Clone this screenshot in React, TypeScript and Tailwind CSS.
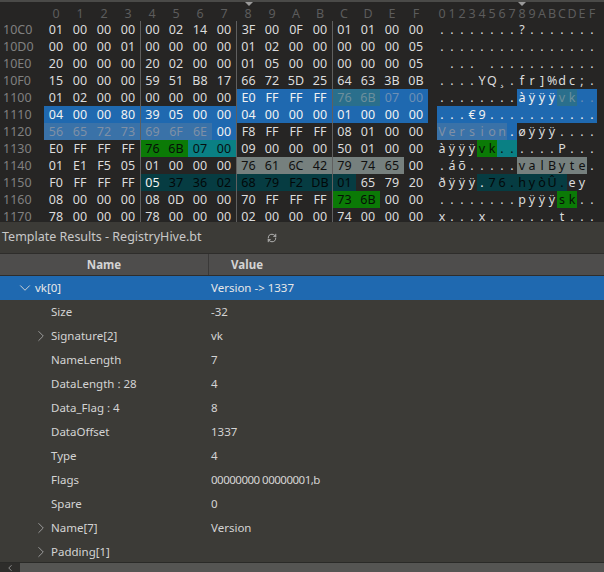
import { ChevronDown, ChevronLeft, ChevronRight, RefreshCw } from "lucide-react";
import React from "react";

type Span = { from: number; to: number; bg: string; fg: string };
type HexRow = { addr: string; bytes: string; ascii: string; spans?: Span[] };

const BLUE = "bg-[#1f69b0]";
const WHITE = "text-[#f2f2f2]";
const hexRows: HexRow[] = [
  { addr: "10C0", bytes: "01 00 00 00 00 02 14 00 3F 00 0F 00 01 01 00 00", ascii: "........?......." },
  { addr: "10D0", bytes: "00 00 00 01 00 00 00 00 01 02 00 00 00 00 00 05", ascii: "................" },
  { addr: "10E0", bytes: "20 00 00 00 20 02 00 00 01 05 00 00 00 00 00 05", ascii: " ... ..........." },
  { addr: "10F0", bytes: "15 00 00 00 59 51 B8 17 66 72 5D 25 64 63 3B 0B", ascii: "....YQ¸.fr]%dc;." },
  {
    addr: "1100",
    bytes: "01 02 00 00 00 00 00 00 E0 FF FF FF 76 6B 07 00",
    ascii: "........àÿÿÿvk..",
    spans: [
      { from: 8, to: 11, bg: BLUE, fg: WHITE },
      { from: 12, to: 13, bg: "bg-[#2a6f8c]", fg: "text-[#6d8f9c]" },
      { from: 14, to: 15, bg: BLUE, fg: "text-[#6d8fb4]" },
    ],
  },
  {
    addr: "1110",
    bytes: "04 00 00 80 39 05 00 00 04 00 00 00 01 00 00 00",
    ascii: "...€9...........",
    spans: [{ from: 0, to: 15, bg: BLUE, fg: WHITE }],
  },
  {
    addr: "1120",
    bytes: "56 65 72 73 69 6F 6E 00 F8 FF FF FF 08 01 00 00",
    ascii: "Version.øÿÿÿ....",
    spans: [
      { from: 0, to: 6, bg: "bg-[#3a72a8]", fg: "text-[#7f90a6]" },
      { from: 7, to: 7, bg: BLUE, fg: WHITE },
    ],
  },
  {
    addr: "1130",
    bytes: "E0 FF FF FF 76 6B 07 00 09 00 00 00 50 01 00 00",
    ascii: "àÿÿÿvk......P...",
    spans: [
      { from: 4, to: 5, bg: "bg-[#0b7a06]", fg: "text-[#061006]" },
      { from: 6, to: 7, bg: "bg-[#0a8084]", fg: "text-[#061010]" },
    ],
  },
  {
    addr: "1140",
    bytes: "01 E1 F5 05 01 00 00 00 76 61 6C 42 79 74 65 00",
    ascii: ".áõ.....valByte.",
    spans: [{ from: 8, to: 14, bg: "bg-[#76807e]", fg: "text-[#101010]" }],
  },
  {
    addr: "1150",
    bytes: "F0 FF FF FF 05 37 36 02 68 79 F2 DB 01 65 79 20",
    ascii: "ðÿÿÿ.76.hyòÛ.ey ",
    spans: [
      { from: 4, to: 4, bg: "bg-[#063c42]", fg: WHITE },
      { from: 5, to: 12, bg: "bg-[#063c42]", fg: "text-[#020809]" },
    ],
  },
  {
    addr: "1160",
    bytes: "08 00 00 00 08 0D 00 00 70 FF FF FF 73 6B 00 00",
    ascii: "........pÿÿÿsk..",
    spans: [{ from: 12, to: 13, bg: "bg-[#0b7a06]", fg: "text-[#061006]" }],
  },
  { addr: "1170", bytes: "78 00 00 00 78 00 00 00 02 00 00 00 74 00 00 00", ascii: "x...x.......t..." },
];

type TreeRow = { name: string; value?: string; caret?: "open" | "closed"; selected?: boolean; tight?: boolean };

const treeRows: TreeRow[] = [
  { name: "vk[0]", value: "Version -> 1337", caret: "open", selected: true },
  { name: "Size", value: "-32" },
  { name: "Signature[2]", value: "vk", caret: "closed" },
  { name: "NameLength", value: "7" },
  { name: "DataLength : 28", value: "4" },
  { name: "Data_Flag : 4", value: "8" },
  { name: "DataOffset", value: "1337" },
  { name: "Type", value: "4" },
  { name: "Flags", value: "00000000 00000001,b", tight: true },
  { name: "Spare", value: "0" },
  { name: "Name[7]", value: "Version", caret: "closed" },
  { name: "Padding[1]", caret: "closed" },
];

function spanFor(row: HexRow, index: number) {
  return row.spans?.find((span) => index >= span.from && index <= span.to);
}

function Hex({ row }: { row: HexRow }) {
  const bytes = row.bytes.split(" ");
  const chars = Array.from(row.ascii);
  return (
    <div className="flex h-[17px] leading-[17px]">
      <div className="w-[44px] shrink-0 pl-[3px] text-[#808080]">{row.addr}</div>
      {bytes.map((byte, i) => {
        const span = spanFor(row, i);
        const divider = i === 4 || i === 8 || i === 12;
        return (
          <div
            key={i}
            className={`w-[24px] shrink-0 text-center ${divider ? "border-l border-[#5f5f5f]" : ""} ${span ? `${span.bg} ${span.fg}` : "text-[#dcdcdc]"}`}
          >
            {byte}
          </div>
        );
      })}
      <div className="w-[9px] shrink-0" />
      {chars.map((char, i) => {
        const span = spanFor(row, i);
        return (
          <div key={i} className={`w-[10px] shrink-0 text-center ${span ? `${span.bg} ${span.fg}` : "text-[#dcdcdc]"}`}>
            {char}
          </div>
        );
      })}
    </div>
  );
}

function Tree({ row }: { row: TreeRow }) {
  return (
    <div className={`flex h-[24px] items-center text-[11.5px] ${row.selected ? "bg-[#1f69b0] text-[#e8e8e8]" : "text-[#d4d4d4]"}`}>
      <div className="flex w-[211px] shrink-0 items-center">
        {row.caret === "open" ? (
          <div className="flex items-center gap-[1px] pl-[16px]">
            <ChevronDown className="h-[18px] w-[18px] text-[#d8d8d8]" strokeWidth={1.25} />
            <span>{row.name}</span>
          </div>
        ) : row.caret === "closed" ? (
          <div className="flex items-center gap-[1px] pl-[32px]">
            <ChevronRight className="h-[18px] w-[18px] text-[#a0a0a0]" strokeWidth={1.25} />
            <span>{row.name}</span>
          </div>
        ) : (
          <span className="pl-[51px]">{row.name}</span>
        )}
      </div>
      <span className={row.tight ? "tracking-[-0.5px]" : ""}>{row.value}</span>
    </div>
  );
}

export default function App() {
  const labels = "0 1 2 3 4 5 6 7 8 9 A B C D E F".split(" ");
  return (
    <div className="flex h-[572px] w-[604px] flex-col overflow-hidden bg-[#3c3b37] font-['Noto_Sans',sans-serif]">
      <div className="relative h-[222px] shrink-0 overflow-hidden bg-[#262524] text-[12.5px]">
        <div className="h-[2px] bg-[#4a4a48]" />
        <div className="absolute left-[245px] top-[2px] h-0 w-0 border-x-[4px] border-t-[4px] border-x-transparent border-t-[#9a9a9a]" />
        <div className="absolute left-[518px] top-[2px] h-0 w-0 border-x-[4px] border-t-[4px] border-x-transparent border-t-[#9a9a9a]" />
        <div className="flex h-[19px] items-start pt-[3px] leading-[17px] text-[#5c5c5c]">
          <div className="w-[44px] shrink-0" />
          {labels.map((label) => (
            <div key={label} className="flex w-[24px] shrink-0 justify-center">
              {label}
            </div>
          ))}
          <div className="w-[9px] shrink-0" />
          {labels.map((label) => (
            <div key={label} className="w-[10px] shrink-0 text-center">
              {label}
            </div>
          ))}
        </div>
        {hexRows.map((row) => (
          <Hex key={row.addr} row={row} />
        ))}
      </div>

      <div className="flex h-[31px] shrink-0 items-center pl-[2px] text-[12.5px] text-[#c8c8c8]">
        <span className="w-[265px]">Template Results - RegistryHive.bt</span>
        <RefreshCw className="h-[10px] w-[10px] text-[#c8c8c8]" strokeWidth={2} />
      </div>

      <div className="flex h-[23px] shrink-0 border-y border-[#2e2d2b] bg-[#4e4d4c] text-[11.5px] font-bold text-[#d4d4d4]">
        <div className="w-[209px] border-r border-[#3a3938] text-center leading-[22px]">Name</div>
        <div className="w-[54px] text-right leading-[22px]">Value</div>
      </div>

      <div className="flex-1 overflow-hidden">
        {treeRows.map((row) => (
          <Tree key={row.name} row={row} />
        ))}
      </div>

      <div className="flex h-[10px] shrink-0 border-t border-[#2a2a28] bg-[#2e2d2b]">
        <div className="flex w-[20px] items-center justify-center overflow-hidden">
          <ChevronLeft className="h-[10px] w-[10px] shrink-0 text-[#a0a0a0]" />
        </div>
        <div className="flex-1 bg-[#555553]" />
      </div>
    </div>
  );
}
